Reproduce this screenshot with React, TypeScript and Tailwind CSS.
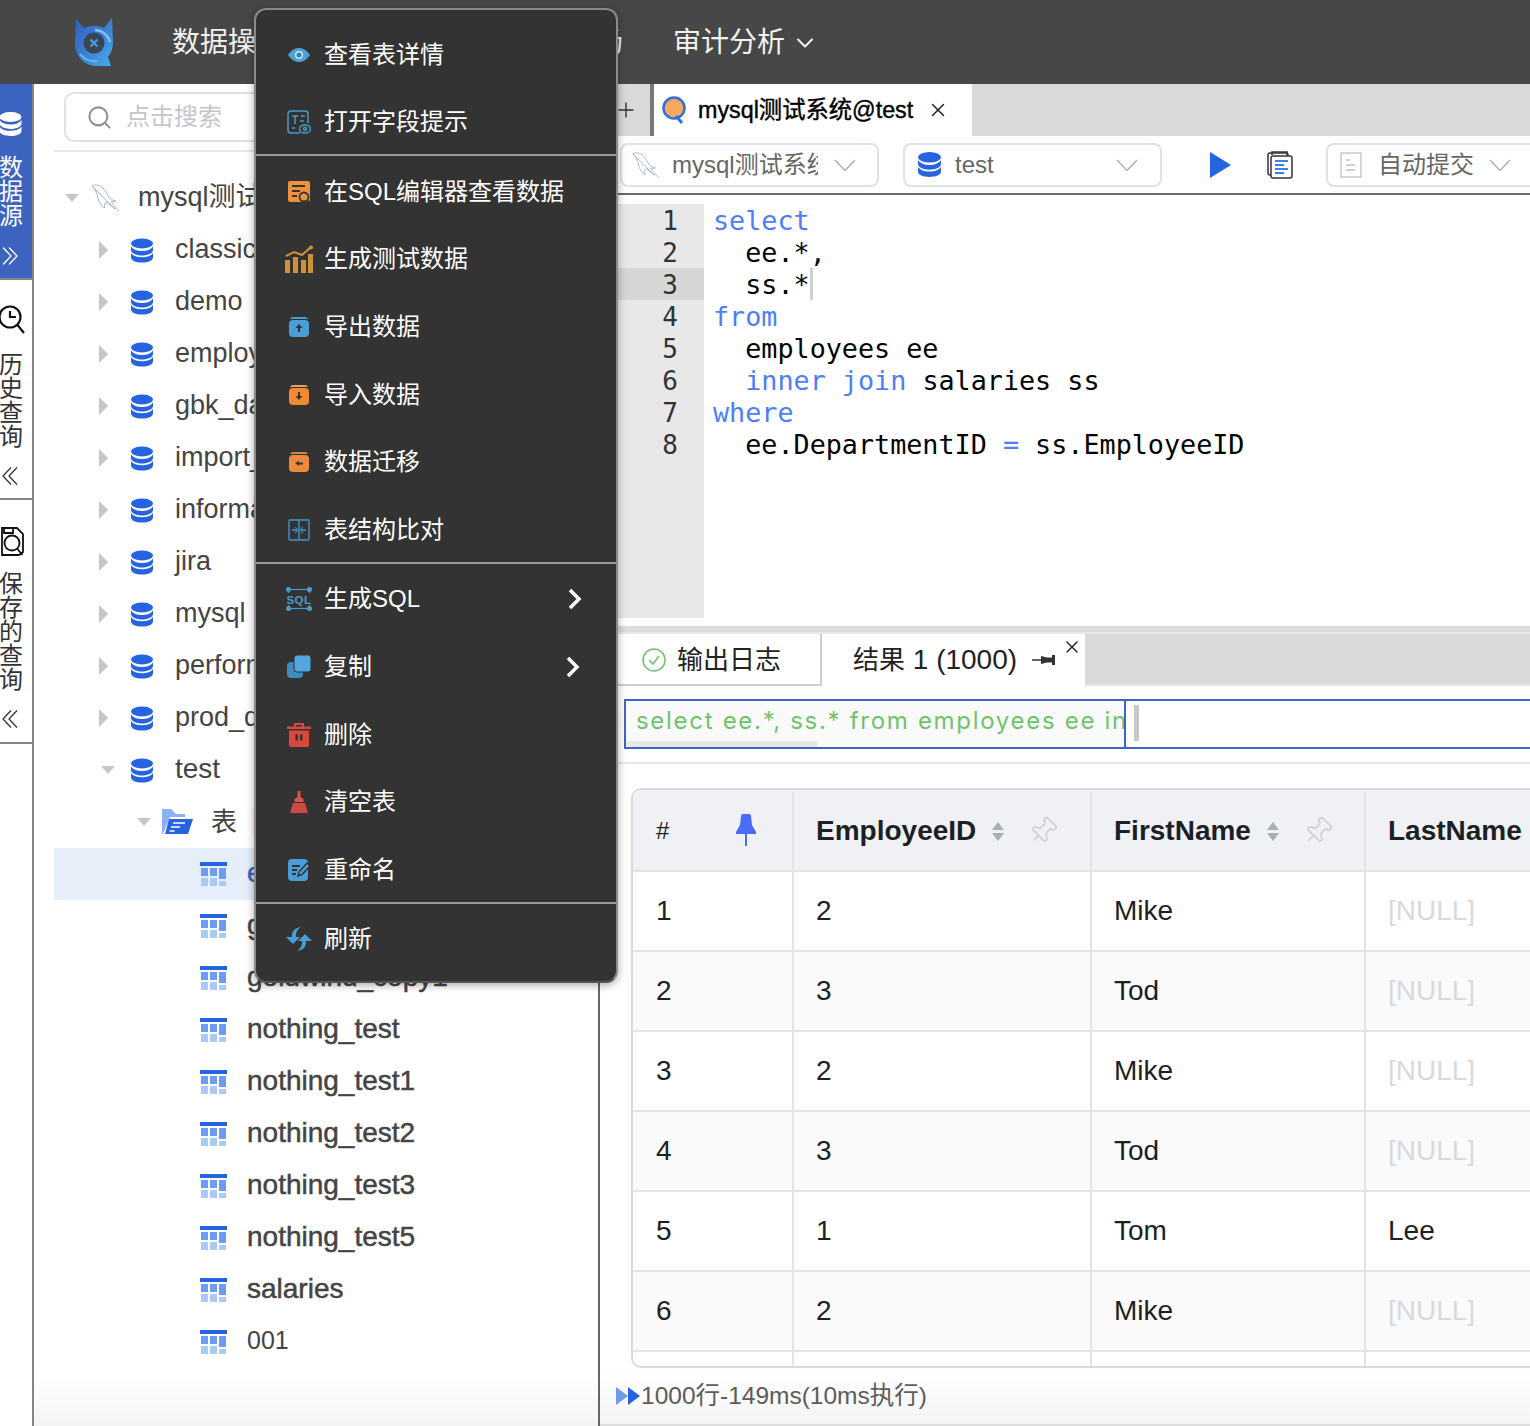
import { ChevronDown, Pin, Plus, Search, X } from 'lucide-react';
import type { ReactNode } from 'react';

const cjk = { sans: '"Liberation Sans","Noto Sans CJK SC",sans-serif' };

function DbIcon({ className = 'w-[22px] h-[25px]', color = '#2563e0' }: { className?: string; color?: string }) {
  return (
    <svg viewBox="0 0 22 24" className={className}>
      <ellipse cx="11" cy="5" rx="11" ry="5" fill={color} />
      <path d="M0 8c2 3 6 4.500 11 4.500S20 11 22 8v3.500C22 14.500 17 17 11 17S0 14.500 0 11.500z" fill={color} />
      <path d="M0 14.500C2 17.500 6 18.800 11 18.800s9-1.300 11-4.300V19c0 3-5 5-11 5S0 22 0 19z" fill={color} />
    </svg>
  );
}

function Dolphin({ className }: { className: string }) {
  return (
    <svg viewBox="0 0 30 30" className={className} fill="none" stroke="#8aa8c0" strokeWidth="0.800">
      <path d="M1 3c3-2 8-1 11 2 3 3 4 7 7 10 2 2 4 3 6 3-2 1-4 1-5 0 2 4 5 7 8 10M24 26c-4-3-7-6-9-7-2 2-2 4-1 6-4-2-6-6-7-10C6 10 4 6 1 3z" />
    </svg>
  );
}

function Chevrons({ dir }: { dir: 'left' | 'right' }) {
  return (
    <svg viewBox="0 0 18 18" className="w-[18px] h-[18px] ml-[2px]" fill="none" stroke="currentColor" strokeWidth="1.300">
      <path d={dir === 'right' ? 'M1 0.500l8 8.500-8 8.500M7 0.500l8 8.500-8 8.500' : 'M9 0.500L1 9l8 8.500M15 0.500L7 9l8 8.500'} />
    </svg>
  );
}

function WideChevron({ className }: { className?: string }) {
  return (
    <svg viewBox="0 0 22 12" className={className ?? 'w-[22px] h-[12px]'} fill="none" stroke="#a8a8a8" strokeWidth="1.200">
      <path d="M1 1l10 10.500L21 1" />
    </svg>
  );
}

function TableIcon() {
  return (
    <svg viewBox="0 0 27 24" className="w-[27px] h-[24px] shrink-0">
      <rect x="0" y="0" width="27" height="4" fill="#2563e0" />
      <rect x="1" y="6" width="7" height="8" fill="#6d9df2" />
      <rect x="10" y="6" width="7" height="8" fill="#6d9df2" />
      <rect x="19" y="6" width="7" height="11" fill="#6d9df2" />
      <rect x="1" y="16" width="7" height="8" fill="#aac8f8" />
      <rect x="10" y="16" width="7" height="8" fill="#aac8f8" />
      <rect x="19" y="19" width="7" height="5" fill="#aac8f8" />
    </svg>
  );
}

function FolderIcon() {
  return (
    <svg viewBox="0 0 31 26" className="w-[31px] h-[26px] shrink-0">
      <path d="M0 0h9l5 5h9v3H8L1 25H0z" fill="#8db0f2" />
      <path d="M7 10h24l-5 15H3z" fill="#2563e0" />
      <path d="M11 14h12M9 18h9M7.500 22h5" stroke="#fff" strokeWidth="1.500" />
    </svg>
  );
}

function TriRight() {
  return <span className="w-0 h-0 border-y-[9px] border-y-transparent border-l-[9px] border-l-[#c3c6cf]" />;
}

function TriDown() {
  return <span className="w-0 h-0 border-x-[7px] border-x-transparent border-t-[8px] border-t-[#c3c6cf]" />;
}

const dbs = ['classicmodels', 'demo', 'employees', 'gbk_data', 'import_test', 'information_schema', 'jira', 'mysql', 'performance_schema', 'prod_db'];
const tables = ['goldwind', 'goldwind_copy1', 'nothing_test', 'nothing_test1', 'nothing_test2', 'nothing_test3', 'nothing_test5', 'salaries'];

function MenuRow({ icon, label, arrow, arrowClass }: { icon: ReactNode; label: string; arrow?: boolean; arrowClass?: string }) {
  return (
    <div className="h-[67.6px] pt-[4px] flex items-center pl-[30px] pr-[34px] text-[24px] text-white">
      <span className="w-[26px] h-[26px] flex items-center justify-center shrink-0">{icon}</span>
      <span className="ml-[12px] flex-1">{label}</span>
      {arrow && (
        <svg viewBox="0 0 14 22" className={arrowClass} fill="none" stroke="#fff" strokeWidth="3.500">
          <path d="M2 2l9 9-9 9" />
        </svg>
      )}
    </div>
  );
}

function BoxIcon({ color, top, arrow }: { color: string; top: string; arrow: string }) {
  return (
    <svg viewBox="0 0 22 22" className="w-[22px] h-[22px]">
      <path d="M2 3c1-2 3-2 4-2h10c1 0 3 0 4 2z" fill={top} />
      <rect x="1" y="4" width="20" height="17" rx="4" fill={color} />
      <path d={arrow} fill="#333" />
    </svg>
  );
}

const rows = [
  ['1', '2', 'Mike', '[NULL]'],
  ['2', '3', 'Tod', '[NULL]'],
  ['3', '2', 'Mike', '[NULL]'],
  ['4', '3', 'Tod', '[NULL]'],
  ['5', '1', 'Tom', 'Lee'],
  ['6', '2', 'Mike', '[NULL]'],
  ['', '', '', ''],
];

function SortCaret() {
  return (
    <span className="flex flex-col gap-[3px] ml-[16px]">
      <span className="w-0 h-0 border-x-[6px] border-x-transparent border-b-[8px] border-b-[#a9adb5]" />
      <span className="w-0 h-0 border-x-[6px] border-x-transparent border-t-[8px] border-t-[#a9adb5]" />
    </span>
  );
}

export default function App() {
  return (
    <div className="relative w-[1530px] h-[1426px] overflow-hidden bg-white" style={{ fontFamily: cjk.sans }}>
      {/* top bar */}
      <div className="h-[84px] bg-[#474747] flex items-center pl-[75px] text-[28px] text-[#f2f2f2]">
        <svg viewBox="0 0 38 48" className="w-[38px] h-[48px] shrink-0">
          <defs>
            <linearGradient id="cat" x1="0" y1="0" x2="1" y2="1">
              <stop offset="0" stopColor="#2f5fb8" />
              <stop offset="0.6" stopColor="#3f86d8" />
              <stop offset="1" stopColor="#45b0e8" />
            </linearGradient>
          </defs>
          <path d="M1 1l8 9c6-3 14-3 20 0l8-10 1 24c0 8-3 12-5 15l3 9H22C9 48 0 38 0 25z" fill="url(#cat)" />
          <circle cx="19" cy="25" r="10.500" fill="#3a4654" />
          <path d="M15.500 21.500l7 7M22.500 21.500l-7 7" stroke="#4a9ad8" strokeWidth="2.200" />
          <path d="M20 12c7 0 13 5 15 12" fill="none" stroke="#7cc4ee" strokeWidth="2.500" />
          <path d="M5 36c4 5 10 8 17 7" fill="none" stroke="#5ec0ee" strokeWidth="2" />
        </svg>
        <span className="ml-[59px] pt-[2px]">数据操作</span>
        <span className="ml-[227px] pt-[2px]">数据市场</span>
        <span className="ml-[50px] pt-[2px]">审计分析</span>
        <ChevronDown size={28} strokeWidth={1.8} className="ml-[6px] mt-[2px]" />
      </div>

      <div className="flex h-[1342px]">
        {/* left rail */}
        <div className="w-[34px] shrink-0 border-r-2 border-[#858585] overflow-hidden bg-white">
          <div className="h-[196px] bg-[#3c63c0] border-b-2 border-[#858585] pt-[28px] text-white">
            <DbIcon className="w-[23px] h-[24px] -ml-[1px]" color="#ffffff" />
            <div className="w-[24px] mt-[20px] -ml-[1px] text-[24px] leading-[24px]">数据源</div>
            <div className="mt-[19px]"><Chevrons dir="right" /></div>
          </div>
          <div className="h-[220px] border-b-2 border-[#858585] pt-[24px] text-[#333]">
            <svg viewBox="0 0 27 32" className="w-[27px] h-[32px] -ml-[2px]" fill="none" stroke="#111" strokeWidth="2.200">
              <circle cx="12" cy="13" r="10.500" />
              <path d="M12 7v6h6M19.500 21l6.500 8" />
            </svg>
            <div className="w-[24px] mt-[17px] -ml-[1px] text-[24px] leading-[24px]">历史查询</div>
            <div className="mt-[18px]"><Chevrons dir="left" /></div>
          </div>
          <div className="h-[244px] border-b-2 border-[#858585] pt-[26px] text-[#333]">
            <svg viewBox="0 0 27 32" className="w-[27px] h-[32px] -ml-[2px]" fill="none" stroke="#111" strokeWidth="1.800">
              <path d="M4 2h15l6 6v18l-4 3H4z" />
              <path d="M6 2v5h9V2" />
              <circle cx="14" cy="17" r="7.500" fill="#fff" />
              <path d="M19.500 23l5 6" />
            </svg>
            <div className="w-[24px] mt-[14px] -ml-[1px] text-[24px] leading-[24px]">保存的查询</div>
            <div className="mt-[18px]"><Chevrons dir="left" /></div>
          </div>
        </div>

        {/* tree */}
        <div className="w-[566px] shrink-0 border-r-2 border-[#666] bg-linear-to-b from-white from-[96%] to-[#f4f4f4] overflow-hidden text-[28px] text-[#444]">
          <div className="h-[68px] ml-[20px] border-b-2 border-[#e8e8e8] pl-[10px] pt-[8px]">
            <div className="w-[500px] h-[50px] border-2 border-[#dfe2e8] rounded-[10px] flex items-center pl-[20px]">
              <Search size={27} strokeWidth={1.8} color="#8f8f8f" />
              <span className="ml-[13px] text-[24px] text-[#c4c6cc]">点击搜索</span>
            </div>
          </div>
          <div className="pt-[20px]">
            <div className="h-[52px] flex items-center pl-[31px] text-[27px]">
              <TriDown />
              <Dolphin className="w-[30px] h-[30px] ml-[12px]" />
              <span className="ml-[17px] pb-[2px] whitespace-nowrap">mysql测试系统</span>
            </div>
            {dbs.map((d) => (
              <div key={d} className="h-[52px] flex items-center pl-[65px] text-[27px]">
                <TriRight />
                <span className="ml-[23px]"><DbIcon /></span>
                <span className="ml-[22px] pb-[2px] whitespace-nowrap">{d}</span>
              </div>
            ))}
            <div className="h-[52px] flex items-center pl-[67px]">
              <TriDown />
              <span className="ml-[16px]"><DbIcon /></span>
              <span className="ml-[22px] pb-[3px]">test</span>
            </div>
            <div className="h-[52px] flex items-center pl-[103px] text-[26px]">
              <TriDown />
              <span className="ml-[11px]"><FolderIcon /></span>
              <span className="ml-[18px]">表</span>
              <span className="ml-[15px] w-[40px] h-[26px] bg-[#fdf3e7]" />
            </div>
            <div className="h-[52px] ml-[20px] bg-[#e6eefa] flex items-center pl-[146px] text-[#3c63c0]">
              <TableIcon />
              <span className="ml-[20px] pb-[3px] [-webkit-text-stroke:0.5px_#3c63c0]">employees</span>
            </div>
            {tables.map((t) => (
              <div key={t} className="h-[52px] flex items-center pl-[166px]">
                <TableIcon />
                <span className="ml-[20px] pb-[3px] [-webkit-text-stroke:0.5px_#444]">{t}</span>
              </div>
            ))}
            <div className="h-[52px] flex items-center pl-[166px] text-[25px]">
              <TableIcon />
              <span className="ml-[20px] pb-[3px]">001</span>
            </div>
          </div>
        </div>

        {/* right pane */}
        <div className="flex-1 min-w-0 flex flex-col bg-linear-to-b from-white from-[96%] to-[#f4f4f4] border-b-2 border-[#dedede]">
          <div className="h-[52px] bg-[#d9d9d9] flex items-stretch pl-[14px] shrink-0">
            <Plus size={24} strokeWidth={1.4} className="self-center text-[#333]" />
            <div className="ml-[12px] w-[322px] bg-white border-l-4 border-[#777] flex items-center pl-[8px]">
              <svg viewBox="0 0 24 28" className="w-[24px] h-[28px]">
                <circle cx="12" cy="12" r="10.500" fill="#f6a95f" stroke="#2f6fe0" strokeWidth="2.500" />
                <path d="M14 20l6 7" stroke="#2f6fe0" strokeWidth="3" />
              </svg>
              <span className="ml-[12px] text-[23.300px] text-black [-webkit-text-stroke:0.4px_#000]">mysql测试系统@test</span>
              <X size={22} strokeWidth={1.6} className="ml-[14px] text-[#222]" />
            </div>
          </div>

          <div className="h-[59px] shrink-0 border-b-2 border-[#6b6b6b] flex items-center pl-[20px] text-[24px] text-[#666]">
            <div className="w-[259px] h-[44px] border-2 border-[#dfe2e8] rounded-[8px] flex items-center pl-[10px] shrink-0">
              <Dolphin className="w-[28px] h-[28px] shrink-0" />
              <span className="ml-[12px] pt-[1px] w-[146px] overflow-hidden whitespace-nowrap">mysql测试系统</span>
              <WideChevron className="w-[22px] h-[12px] ml-[16px]" />
            </div>
            <div className="w-[259px] h-[44px] ml-[24px] border-2 border-[#dfe2e8] rounded-[8px] flex items-center pl-[13px] shrink-0">
              <DbIcon className="w-[23px] h-[25px]" />
              <span className="ml-[14px] pt-[1px] w-[161px]">test</span>
              <WideChevron />
            </div>
            <svg viewBox="0 0 21 26" className="w-[21px] h-[26px] ml-[48px] shrink-0"><path d="M0 0l21 13L0 26z" fill="#2563e0" /></svg>
            <svg viewBox="0 0 26 28" className="w-[26px] h-[28px] ml-[36px] shrink-0" fill="none">
              <path d="M5 4V1h15v3" stroke="#333" strokeWidth="1.500" />
              <rect x="1" y="2" width="20" height="22" rx="2" stroke="#333" strokeWidth="1.500" />
              <rect x="4" y="5" width="21" height="22" rx="2" fill="#fff" stroke="#333" strokeWidth="1.500" />
              <path d="M8 10h13M8 14h9M8 18h13M8 22h9" stroke="#3b7fe8" strokeWidth="1.800" />
            </svg>
            <div className="w-[230px] h-[44px] ml-[33px] border-2 border-[#dfe2e8] rounded-[8px] flex items-center pl-[12px] shrink-0">
              <svg viewBox="0 0 22 26" className="w-[22px] h-[26px]" fill="none">
                <rect x="1" y="1" width="20" height="24" stroke="#c9c9c9" strokeWidth="1.500" />
                <path d="M6 8h4M6 13h9M6 18h9" stroke="#c0c0c0" strokeWidth="1.500" />
              </svg>
              <span className="ml-[16px] pt-[1px]">自动提交</span>
              <WideChevron className="w-[22px] h-[12px] ml-[15px]" />
            </div>
          </div>

          {/* editor */}
          <div className="h-[431px] shrink-0 pt-[9px] pb-[8px] flex bg-white">
            <div className="w-[104px] bg-[#e8e8e8] shrink-0 font-['DejaVu_Sans_Mono'] text-[26px] leading-[32px] text-[#333] text-right">
              {[1, 2, 3, 4, 5, 6, 7, 8].map((n) => (
                <div key={n} className={n === 3 ? 'bg-[#d6d6d6] pr-[26px] h-[32px]' : 'pr-[26px] h-[32px]'}>
                  <span className="relative top-[1px]">{n}</span>
                </div>
              ))}
            </div>
            <pre className="pl-[9px] font-['DejaVu_Sans_Mono'] text-[26.750px] leading-[32px] text-black">
              <div className="text-[#4d7ef7] pt-[1px] h-[32px]">select</div>
              <div className="pt-[1px] h-[32px]">{'  ee.*,'}</div>
              <div className="flex h-[32px]"><span className="pt-[1px]">{'  ss.*'}</span><span className="w-[3px] h-[32px] bg-[#cfcfcf]" /></div>
              <div className="text-[#4d7ef7] pt-[1px] h-[32px]">from</div>
              <div className="pt-[1px] h-[32px]">{'  employees ee'}</div>
              <div className="pt-[1px] h-[32px]">{'  '}<span className="text-[#4d7ef7]">inner join</span>{' salaries ss'}</div>
              <div className="text-[#4d7ef7] pt-[1px] h-[32px]">where</div>
              <div className="pt-[1px] h-[32px]">{'  ee.DepartmentID '}<span className="text-[#4d7ef7]">=</span>{' ss.EmployeeID'}</div>
            </pre>
          </div>

          <div className="h-[8px] shrink-0 bg-[#dcdcdc] border-b-2 border-[#e8e8ec]" />

          {/* result tabs */}
          <div className="h-[52px] shrink-0 flex bg-[#d9d9d9] border-b-2 border-[#e3e5ea] text-[26px] text-[#222]">
            <div className="w-[222px] h-[52px] pt-[2px] bg-white border-r-2 border-b-2 border-[#cfcfcf] flex items-center pl-[42px]">
              <svg viewBox="0 0 24 24" className="w-[24px] h-[24px]" fill="none" stroke="#6fc36a" strokeWidth="1.500">
                <circle cx="12" cy="12" r="11" />
                <path d="M7 12l4 4 6-8" />
              </svg>
              <span className="ml-[11px]">输出日志</span>
            </div>
            <div className="relative w-[263px] h-[52px] bg-white flex items-center pl-[31px]">
              <span>结果<span className="text-[28px]"> 1 (1000)</span></span>
              <svg viewBox="0 0 24 14" className="w-[24px] h-[14px] ml-[15px]">
                <path d="M0 7h9" stroke="#333" strokeWidth="1.500" />
                <path d="M9 3l6 1.500h5V2h3v10h-3V9.500h-5L9 11z" fill="#333" />
              </svg>
              <X size={20} strokeWidth={1.6} className="absolute right-[3px] top-[3px] text-[#222]" />
            </div>
          </div>

          {/* sql strip */}
          <div className="h-[78px] shrink-0 border-b-2 border-[#e8e8e8] pt-[13px] pl-[24px]">
            <div className="h-[50px] w-[920px] border-2 border-[#3d66c8] flex">
              <div className="relative w-[500px] h-[46px] bg-[#fafafa] border-r-2 border-[#3d66c8] overflow-hidden pl-[10px] text-[24px] leading-[40px] tracking-[1.700px] text-[#6fc36a] whitespace-nowrap font-['Inter']">
                select ee.*, ss.* from employees ee inner join salaries ss
                <span className="absolute left-0 bottom-0 w-[192px] h-[6px] bg-[#e8e8e8] rounded-[3px]" />
              </div>
              <div className="ml-[8px] mt-[4px] w-[5px] h-[36px] bg-[#c8c8c8]" />
            </div>
          </div>

          {/* table */}
          <div className="pt-[24px] pl-[31px] shrink-0">
            <div className="w-[1000px] h-[580px] border-2 border-[#d8dae0] rounded-[10px] overflow-hidden text-[28px] text-[#1c1f24]">
              <div className="flex h-[82px] pt-[2px] bg-[#eff1f5] border-b-2 border-[#e3e4e9] font-bold">
                <div className="w-[161px] border-r-2 border-[#e3e4e9] flex items-center pl-[23px] font-normal text-[24px]">
                  <span className="w-[80px]">#</span>
                  <svg viewBox="0 0 20 32" className="w-[20px] h-[32px] -mt-[2px]">
                    <path d="M5 2a2 2 0 0 1 2-2h6a2 2 0 0 1 2 2l1 9 4 7a1 1 0 0 1-1 2h-8v12H9V20H1a1 1 0 0 1-1-2l4-7z" fill="#4a6cf7" />
                  </svg>
                </div>
                <div className="w-[298px] border-r-2 border-[#e3e4e9] flex items-center pl-[22px]">
                  EmployeeID
                  <SortCaret />
                  <Pin size={30} strokeWidth={1.4} className="ml-[24px] rotate-45 text-[#cfd1d6]" />
                </div>
                <div className="w-[274px] border-r-2 border-[#e3e4e9] flex items-center pl-[22px]">
                  FirstName
                  <SortCaret />
                  <Pin size={30} strokeWidth={1.4} className="ml-[24px] rotate-45 text-[#cfd1d6]" />
                </div>
                <div className="flex-1 flex items-center pl-[22px]">LastName</div>
              </div>
              {rows.map((r, i) => (
                <div key={i} className={i % 2 === 0 ? 'flex h-[80px] bg-white border-b-2 border-[#e3e4e9]' : 'flex h-[80px] bg-[#fafafa] border-b-2 border-[#e3e4e9]'}>
                  <div className="w-[161px] border-r-2 border-[#e3e4e9] flex items-center pl-[23px]">{r[0]}</div>
                  <div className="w-[298px] border-r-2 border-[#e3e4e9] flex items-center pl-[22px]">{r[1]}</div>
                  <div className="w-[274px] border-r-2 border-[#e3e4e9] flex items-center pl-[22px]">{r[2]}</div>
                  <div className={r[3] === '[NULL]' ? 'flex-1 flex items-center pl-[22px] text-[#d8d9de]' : 'flex-1 flex items-center pl-[22px]'}>{r[3]}</div>
                </div>
              ))}
            </div>
          </div>

          <div className="flex items-center pl-[16px] pt-[10px] text-[24.500px] text-[#5c5c5c]">
            <svg viewBox="0 0 24 18" className="w-[24px] h-[18px]">
              <path d="M0 0l12 9L0 18z" fill="#6f9bee" />
              <path d="M12 0l12 9-12 9z" fill="#2563e0" />
            </svg>
            <span className="ml-[1px]">1000行-149ms(10ms执行)</span>
          </div>
        </div>
      </div>

      {/* context menu */}
      <div className="absolute left-[254px] top-[8px] w-[364px] h-[975px] bg-[#333] border-2 border-[#8a8a8a] border-b-[#555] rounded-[12px] shadow-[0_2px_8px_rgba(0,0,0,0.35)] overflow-hidden">
        <div className="pt-[9px] pb-[1px]">
          <div className="h-[67px]">
            <MenuRow label="查看表详情" icon={
              <svg viewBox="0 0 22 14" className="w-[22px] h-[14px]">
                <path d="M0 7c3-4.500 7-7 11-7s8 2.500 11 7c-3 4.500-7 7-11 7S3 11.500 0 7z" fill="#4e9fd4" />
                <circle cx="11" cy="7" r="4" fill="#cfe6f5" />
                <circle cx="11" cy="7" r="2.500" fill="#2f7fb5" />
              </svg>} />
          </div>
          <div className="h-[67px]">
            <MenuRow label="打开字段提示" icon={
              <svg viewBox="0 0 24 24" className="w-[24px] h-[24px]" fill="none" stroke="#4a9ac9" strokeWidth="1.500">
                <path d="M13 23H4a3 3 0 0 1-3-3V4a3 3 0 0 1 3-3h14a3 3 0 0 1 3 3v9" />
                <path d="M5 6h6M8 6v8M14 6h4M5 18h3M13 11h4" />
                <ellipse cx="18" cy="19" rx="5.500" ry="4" fill="#333" />
                <circle cx="18" cy="19" r="1.500" />
              </svg>} />
          </div>
        </div>
        <div className="h-[2px] bg-[#999]" />
        <MenuRow label="在SQL编辑器查看数据" icon={
          <svg viewBox="0 0 22 22" className="w-[22px] h-[22px]">
            <rect x="0" y="0" width="22" height="21" rx="2" fill="#f08f3c" />
            <path d="M4 5h13M4 10h8M4 15h5" stroke="#333" strokeWidth="2" />
            <circle cx="16" cy="16" r="4.500" fill="#f08f3c" stroke="#333" strokeWidth="1.800" />
            <path d="M19 19l3 3" stroke="#333" strokeWidth="1.800" />
          </svg>} />
        <MenuRow label="生成测试数据" icon={
          <svg viewBox="0 0 28 28" className="w-[28px] h-[28px] shrink-0">
            <path d="M1 11l8-4 8 3 9-8" fill="none" stroke="#cf9238" strokeWidth="2" />
            <circle cx="26" cy="2.500" r="2" fill="#cf9238" />
            <rect x="0" y="15" width="5" height="13" fill="#cf9238" />
            <rect x="8" y="12" width="5" height="16" fill="#cf9238" />
            <rect x="16" y="15" width="5" height="13" fill="#cf9238" />
            <rect x="23" y="9" width="5" height="19" fill="#cf9238" />
          </svg>} />
        <MenuRow label="导出数据" icon={<BoxIcon color="#4a9ed6" top="#4a9ed6" arrow="M11 8l3.500 4H12v4h-2v-4H7.500z" />} />
        <MenuRow label="导入数据" icon={<BoxIcon color="#f08a33" top="#e9a15c" arrow="M10 8h2v4h2.500L11 16l-3.500-4H10z" />} />
        <MenuRow label="数据迁移" icon={<BoxIcon color="#ea8a3a" top="#c98a50" arrow="M7 12l4-2v1.500h4v2h-4V15z" />} />
        <MenuRow label="表结构比对" icon={
          <svg viewBox="0 0 22 22" className="w-[22px] h-[22px]" fill="none" stroke="#3f7ea6" strokeWidth="1.800">
            <rect x="1" y="1" width="20" height="20" rx="1.500" />
            <path d="M11 1v20M4 11h5M13 11h5" />
            <path d="M7 8l3 3-3 3M15 8l-3 3 3 3" strokeWidth="1.200" />
          </svg>} />
        <div className="h-[2px] bg-[#999]" />
        <MenuRow label="生成SQL" arrow arrowClass="w-[14px] h-[22px]" icon={
          <svg viewBox="0 0 26 24" className="w-[26px] h-[24px]" fill="none" stroke="#4a9ac9" strokeWidth="1.200">
            <rect x="2.500" y="2.500" width="21" height="19" />
            <circle cx="2.500" cy="2.500" r="2" fill="#4a9ac9" />
            <circle cx="23.500" cy="2.500" r="2" fill="#4a9ac9" />
            <circle cx="2.500" cy="21.500" r="2" fill="#4a9ac9" />
            <circle cx="23.500" cy="21.500" r="2" fill="#4a9ac9" />
            <rect x="0" y="6" width="26" height="12" fill="#333" stroke="none" />
            <text x="13" y="16.500" textAnchor="middle" fontSize="11.500" fontWeight="bold" fontFamily="Liberation Sans" fill="#4a9ac9" stroke="none" letterSpacing="0.500">SQL</text>
          </svg>} />
        <MenuRow label="复制" arrow arrowClass="w-[14px] h-[22px] mr-[2px]" icon={
          <svg viewBox="0 0 24 24" className="w-[24px] h-[24px]">
            <rect x="0" y="7" width="16" height="16" rx="4" fill="#3f8cc0" />
            <rect x="7" y="0" width="17" height="17" rx="3" fill="#52a8de" stroke="#333" strokeWidth="1" />
          </svg>} />
        <MenuRow label="删除" icon={
          <svg viewBox="0 0 24 24" className="w-[24px] h-[24px]">
            <path d="M8 4V1h8v3" fill="none" stroke="#d9473f" strokeWidth="2" />
            <rect x="0" y="3.500" width="24" height="2.500" fill="#d9473f" />
            <path d="M2 7.500h20V22a2 2 0 0 1-2 2H4a2 2 0 0 1-2-2z" fill="#d9473f" />
            <path d="M8.500 11.500h2.500v6H8.500zM13 11.500h2.500v6H13z" fill="#333" />
          </svg>} />
        <MenuRow label="清空表" icon={
          <svg viewBox="0 0 18 22" className="w-[18px] h-[22px]">
            <path d="M7.500 0h3v6l3 2v3H4.500V8l3-2z" fill="#d9554c" />
            <path d="M3 12h12l3 10H0z" fill="#c94b44" />
          </svg>} />
        <MenuRow label="重命名" icon={
          <svg viewBox="0 0 24 24" className="w-[24px] h-[24px]">
            <rect x="1" y="1" width="20" height="22" rx="4" fill="#4a9ed6" />
            <path d="M5 8h8M5 12h5M5 16h4" stroke="#333" strokeWidth="1.800" />
            <path d="M11 18l1-4 8-9 3 3-8 8.500z" fill="#4a9ed6" stroke="#333" strokeWidth="1.500" />
          </svg>} />
        <div className="h-[2px] bg-[#999]" />
        <MenuRow label="刷新" icon={
          <svg viewBox="0 0 26 24" className="w-[26px] h-[24px]" fill="#4a9ed6">
            <path d="M15 0C8 1 5.500 5 6 10H0l7 7 7-7h-4c-.5-4 1.500-8 5-10z" />
            <path d="M11 24c7-1 9.500-5 9-10h6l-7-7-7 7h4c.5 4-1.500 8-5 10z" />
          </svg>} />
      </div>
    </div>
  );
}
